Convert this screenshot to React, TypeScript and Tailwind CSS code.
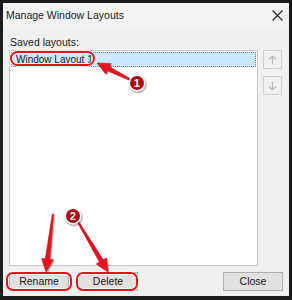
import React from "react";

type P = [number, number];

function arrowPoints(tail: P, tip: P, headLen = 13, headW = 12, shaftW = 4.5, tailW = 1.5): string {
  const dx = tip[0] - tail[0];
  const dy = tip[1] - tail[1];
  const len = Math.hypot(dx, dy);
  const ux = dx / len;
  const uy = dy / len;
  const nx = -uy;
  const ny = ux;
  const bx = tip[0] - ux * headLen;
  const by = tip[1] - uy * headLen;
  const pts: P[] = [
    [tail[0] + nx * tailW / 2, tail[1] + ny * tailW / 2],
    [bx + nx * shaftW / 2, by + ny * shaftW / 2],
    [bx + nx * headW / 2, by + ny * headW / 2],
    [tip[0], tip[1]],
    [bx - nx * headW / 2, by - ny * headW / 2],
    [bx - nx * shaftW / 2, by - ny * shaftW / 2],
    [tail[0] - nx * tailW / 2, tail[1] - ny * tailW / 2],
  ];
  return pts.map((p) => `${p[0].toFixed(1)},${p[1].toFixed(1)}`).join(" ");
}

function Arrow({ tail, tip }: { tail: P; tip: P }) {
  const shadowTail: P = [tail[0] + 1.5, tail[1] + 1.5];
  const shadowTip: P = [tip[0] + 1.5, tip[1] + 1.5];
  return (
    <g>
      <polygon points={arrowPoints(shadowTail, shadowTip)} fill="rgba(0,0,0,0.25)" />
      <polygon points={arrowPoints(tail, tip)} fill="#e8141c" stroke="#c00010" strokeWidth="0.5" />
    </g>
  );
}

function Badge({ cx, cy, n }: { cx: number; cy: number; n: string }) {
  return (
    <g>
      <circle cx={cx + 1} cy={cy + 1.5} r={9} fill="rgba(0,0,0,0.25)" />
      <circle cx={cx} cy={cy} r={8.5} fill="#fff" />
      <circle cx={cx} cy={cy} r={7} fill="#a80d12" />
      <text
        x={cx}
        y={cy + 3.6}
        textAnchor="middle"
        fontSize="10.5"
        fontWeight="700"
        fill="#fff"
        fontFamily="'Liberation Sans', Arial, sans-serif"
      >
        {n}
      </text>
    </g>
  );
}

function WinButton({ label, className = "" }: { label: string; className?: string }) {
  return (
    <div
      className={
        "w-[60px] h-[19px] flex items-center justify-center bg-[#e1e1e1] border border-[#adadad] text-[10.5px] text-[#1a1a1a] " +
        className
      }
    >
      {label}
    </div>
  );
}

export default function App() {
  return (
    <div
      className="relative w-[292px] h-[300px] bg-[#1c1c1c] pt-[3px] px-[3px] pb-[4px] overflow-hidden"
      style={{ fontFamily: "'Liberation Sans', Arial, sans-serif" }}
    >
      <div className="w-full h-full bg-[#f0f0f0] flex flex-col">
        {/* Title bar */}
        <div className="h-[25px] flex items-center justify-between pl-[3px] pr-[6px] bg-[#f3f3f3]">
          <span className="text-[10.5px] text-[#1a1a1a]">Manage Window Layouts</span>
          <svg width="11" height="11" viewBox="0 0 11 11">
            <path d="M0.5 0.5 L10.5 10.5 M10.5 0.5 L0.5 10.5" stroke="#222" strokeWidth="1.1" />
          </svg>
        </div>
        {/* Body */}
        <div className="flex-1 flex flex-col pl-[6px] pr-[3px] pt-[7px]">
          <div className="text-[10.5px] text-[#1a1a1a] leading-[14px] pl-[1px]">Saved layouts:</div>
          <div className="flex mt-[1px] gap-[5px]">
            <div className="w-[249px] h-[216px] bg-white border border-[#c8c8c8] p-[1px]">
              <div className="h-[15px] bg-[#cce8ff] border border-dotted border-[#5a8cb4] flex items-center pl-[4px] text-[10px] text-[#1a1a1a]">
                Window Layout 1
              </div>
            </div>
            <div className="flex flex-col gap-[7px]">
              <div className="w-[19px] h-[19px] border border-[#cfcfcf] bg-[#f0f0f0] flex items-center justify-center">
                <svg width="9" height="10" viewBox="0 0 9 10">
                  <path d="M4.5 9.5 V1 M1 4.5 L4.5 1 L8 4.5" stroke="#b8b8b8" strokeWidth="1.2" fill="none" />
                </svg>
              </div>
              <div className="w-[19px] h-[19px] border border-[#cfcfcf] bg-[#f0f0f0] flex items-center justify-center">
                <svg width="9" height="10" viewBox="0 0 9 10">
                  <path d="M4.5 0.5 V9 M1 5.5 L4.5 9 L8 5.5" stroke="#b8b8b8" strokeWidth="1.2" fill="none" />
                </svg>
              </div>
            </div>
          </div>
          <div className="flex items-center mt-[6px]">
            <WinButton label="Rename" />
            <WinButton label="Delete" className="ml-[9px] border-[#7a7a7a]" />
            <WinButton label="Close" className="ml-auto mr-[3px]" />
          </div>
        </div>
      </div>

      {/* Annotation overlay */}
      <svg className="absolute left-0 top-0 pointer-events-none" width="292" height="300" viewBox="0 0 292 300">
        <rect x="11" y="52" width="83" height="13" rx="6.5" fill="none" stroke="#fff" strokeWidth="3.5" opacity="0.8" />
        <rect x="11" y="52" width="83" height="13" rx="6.5" fill="none" stroke="#e3141c" strokeWidth="2" />
        <rect x="7" y="273" width="64" height="17" rx="6" fill="none" stroke="#fff" strokeWidth="3.5" opacity="0.8" />
        <rect x="7" y="273" width="64" height="17" rx="6" fill="none" stroke="#e3141c" strokeWidth="2" />
        <rect x="77" y="273" width="60" height="17" rx="6" fill="none" stroke="#fff" strokeWidth="3.5" opacity="0.8" />
        <rect x="77" y="273" width="60" height="17" rx="6" fill="none" stroke="#e3141c" strokeWidth="2" />
        <Arrow tail={[131, 80]} tip={[97, 63]} />
        <Arrow tail={[53, 214]} tip={[46, 272]} />
        <Arrow tail={[78, 222]} tip={[108, 272]} />
        <Badge cx={137} cy={83} n="1" />
        <Badge cx={73} cy={216} n="2" />
      </svg>
    </div>
  );
}
